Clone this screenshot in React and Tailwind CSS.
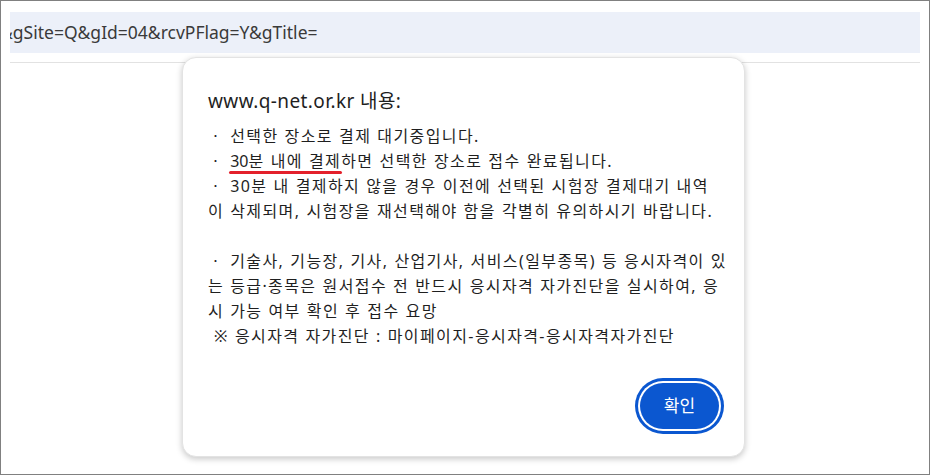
export default function App() {
  const kr = { fontFamily: '"Noto Sans", "Noto Sans CJK KR", sans-serif' };
  return (
    <div className="relative w-[930px] h-[475px] overflow-hidden border border-[#808080] bg-white px-[9px]">
      <div className="mt-[11px] h-[41px] bg-[#ecf0f9] overflow-hidden flex items-center">
        <div
          className="whitespace-nowrap text-[17.5px] text-[#3a3a3a] ml-[-10px]"
          style={{ fontFamily: '"Noto Sans", sans-serif' }}
        >
          &amp;gSite=Q&amp;gId=04&amp;rcvPFlag=Y&amp;gTitle=
        </div>
      </div>
      <div className="mt-[9px] h-px bg-[#e2e2e2]" />

      <div
        className="absolute left-[181px] top-[56px] w-[563px] h-[400px] rounded-[14px] border border-[#e3e3e3] bg-white shadow-[0_2px_6px_rgba(0,0,0,0.22)] pl-[25px] pr-[25px] pt-[30px] flex flex-col text-[#1f1f1f]"
        style={kr}
      >
        <div className="text-[19px] leading-[26px] tracking-[0.4px]">www.q-net.or.kr 내용:</div>
        <div className="mt-[10px] text-[16px] leading-[25px] tracking-[1.4px] [word-spacing:0.5px] whitespace-nowrap">
          <div>ㆍ 선택한 장소로 결제 대기중입니다.</div>
          <div>
            ㆍ{" "}
            <span className="relative inline-block">
              <span className="tracking-[0px]">30</span>분 내에 결제
              <span className="absolute left-[-1px] right-[-1px] bottom-[0px] h-[3px] rounded-full bg-[#e3202b]" />
            </span>
            하면 선택한 장소로 접수 완료됩니다.
          </div>
          <div>ㆍ 30분 내 결제하지 않을 경우 이전에 선택된 시험장 결제대기 내역</div>
          <div>이 삭제되며, 시험장을 재선택해야 함을 각별히 유의하시기 바랍니다.</div>
          <div>&nbsp;</div>
          <div>ㆍ 기술사, 기능장, 기사, 산업기사, 서비스(일부종목) 등 응시자격이 있</div>
          <div>는 등급·종목은 원서접수 전 반드시 응시자격 자가진단을 실시하여, 응</div>
          <div>시 가능 여부 확인 후 접수 요망</div>
          <div>&nbsp;※ 응시자격 자가진단 : 마이페이지-응시자격-응시자격자가진단</div>
        </div>
        <div className="mt-auto mb-[27px] flex justify-end">
          <button className="w-[79px] h-[46px] rounded-full bg-[#0b57d0] text-white text-[17px] ring-[3px] ring-[#0b57d0] ring-offset-2 ring-offset-white">
            확인
          </button>
        </div>
      </div>
    </div>
  );
}
